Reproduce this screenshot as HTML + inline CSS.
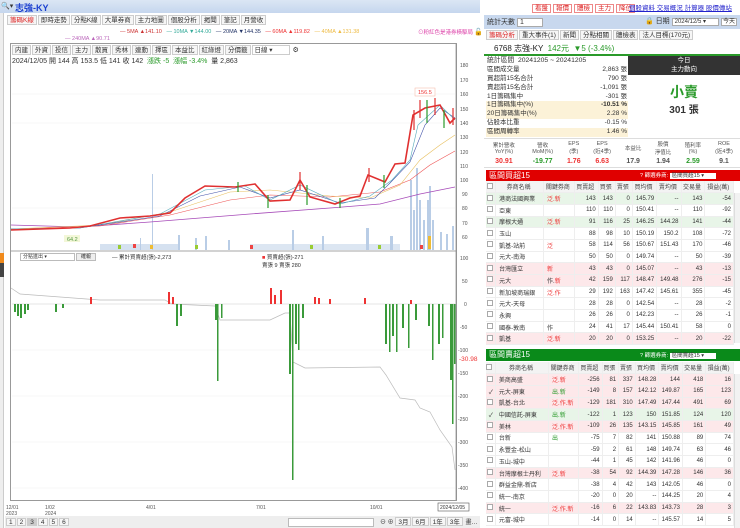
<!DOCTYPE html>
<html><head><meta charset="utf-8"><style>
*{margin:0;padding:0;box-sizing:border-box}
body{width:740px;height:528px;overflow:hidden;background:#fff;font-family:"Liberation Sans","Noto Sans CJK TC",sans-serif;font-size:7px;color:#333;position:relative}
.a{position:absolute;white-space:nowrap}
.tab{display:inline-block;border:1px solid #ccc;background:#f6f6f6;padding:0 2px;height:10px;line-height:9px;font-size:6.5px;margin-right:1px}
table{border-collapse:collapse;width:100%}
.t td{height:11.7px;font-size:6px;border-bottom:1px solid #eee;border-right:1px solid #eee;text-align:right;padding-right:2px}
.t td.l{text-align:left;padding-left:3px}
.t tr.h td{text-align:center;background:#f3f3f3;color:#444}
.pk{background:#fde8ea}.gn{background:#e8f5e8}
.r{color:#e33}.g{color:#2a9a2a}
.cb{display:inline-block;width:6px;height:6px;border:1px solid #aaa;background:#fff}
.st div{height:8.9px;line-height:8.9px;font-size:6.5px;display:flex;justify-content:space-between;padding:0 1px 0 1px}
</style></head><body>
<div class="a" style="left:0;top:0;width:480px;height:13px;background:linear-gradient(#dbe6f4,#c5d6ee)"></div>
<div class="a" style="left:1px;top:2px;font-size:7px">🔍▾</div>
<div class="a" style="left:15px;top:1px;font-size:9px;color:#1a3fd0;font-weight:bold">志強-KY</div>
<div class="a" style="left:480px;top:0;width:260px;height:14px;background:#fff"></div>
<div class="a" style="left:532px;top:2px;font-size:6.5px;color:#d22">
<span style="border:1px solid #e88;padding:0 2px;margin-right:2px">看盤</span><span style="border:1px solid #e88;padding:0 2px;margin-right:2px">報價</span><span style="border:1px solid #e88;padding:0 2px;margin-right:2px">體檢</span><span style="border:1px solid #e88;padding:0 2px;margin-right:2px">主力</span><span style="border:1px solid #e88;padding:0 2px">降位</span></div>
<div class="a" style="left:629px;top:2px;font-size:6.5px;color:#22c;text-decoration:underline">個股資料 交易概況 計算器 股價傳站</div>
<div class="a" style="left:0;top:13px;width:4px;height:515px;background:#eee;border-right:1px solid #ccc"></div>
<div class="a" style="left:0;top:253px;width:4px;height:10px;background:#f08a1c"></div>
<div class="a" style="left:0;top:263px;width:4px;height:14px;background:#444"></div>
<div class="a" style="left:7px;top:15px"><span class="tab" style="color:#d22">籌碼K線</span><span class="tab">即時走勢</span><span class="tab">分點K線</span><span class="tab">大單券商</span><span class="tab">主力地圖</span><span class="tab">個股分析</span><span class="tab">揭聞</span><span class="tab">筆記</span><span class="tab">月營收</span></div>
<div class="a" style="left:120px;top:29px;font-size:5.5px"><span style="color:#c33">— </span><span style="color:#c33">5MA ▲141.10</span> &nbsp;&nbsp;<span style="color:#3a9">— 10MA ▼144.00</span> &nbsp;&nbsp;<span style="color:#236">— 20MA ▼144.35</span> &nbsp;&nbsp;<span style="color:#e33">— 60MA ▲119.82</span> &nbsp;&nbsp;<span style="color:#eb4">— 40MA ▲131.38</span></div>
<div class="a" style="left:65px;top:36px;font-size:5.5px;color:#b6b">— 240MA ▲90.71</div>
<div class="a" style="left:418px;top:28px;font-size:5.5px;color:#d4a">⊙粉紅色是港券橫駆局</div>
<div class="a" style="left:474px;top:28px;font-size:7px">🔓</div>
<div class="a" style="left:10px;top:43px;width:447px;height:458px;border:1px solid #999"></div>
<div class="a" style="left:12px;top:45px"><span class="tab">内建</span><span class="tab">外資</span><span class="tab">投信</span><span class="tab">主力</span><span class="tab">散買</span><span class="tab">秀林</span><span class="tab">連動</span><span class="tab">擇區</span><span class="tab">本益比</span><span class="tab">紅綠燈</span><span class="tab">分價籤</span><span class="tab" style="width:38px;background:#fff">日線 ▾</span> ⚙</div>
<div class="a" style="left:12px;top:56px;font-size:7px">2024/12/05 開 144 高 153.5 低 141 收 142 &nbsp;<span class="g">漲跌 -5 &nbsp;漲幅 -3.4%</span> &nbsp;量 2,863</div>
<svg class="a" style="left:0;top:0" width="480" height="528">
<g font-size="5" fill="#555" font-family="Liberation Sans">
<text x="460" y="67">180</text><text x="460" y="82">170</text><text x="460" y="96">160</text><text x="460" y="111">150</text><text x="460" y="125">140</text><text x="460" y="139">130</text><text x="460" y="154">120</text><text x="460" y="168">110</text><text x="460" y="182">100</text><text x="462" y="196">90</text><text x="462" y="210">80</text><text x="462" y="225">70</text><text x="462" y="239">60</text>
<text x="460" y="260">100</text><text x="462" y="283">50</text><text x="464" y="306">0</text><text x="460" y="329">-50</text><text x="458" y="352">-100</text><text x="458" y="375">-150</text><text x="458" y="398">-200</text><text x="458" y="421">-250</text><text x="458" y="444">-300</text><text x="458" y="467">-350</text><text x="458" y="490">-400</text>
<text x="6" y="509">12/01</text><text x="6" y="515">2023</text><text x="45" y="509">1/02</text><text x="45" y="515">2024</text><text x="146" y="509">4/01</text><text x="256" y="509">7/01</text><text x="370" y="509">10/01</text></g>
<rect x="438" y="503" width="31" height="8" fill="#fff" stroke="#555" stroke-width=".6"/><text x="440" y="509" font-size="5" fill="#333">2024/12/05</text>
<g stroke="#f0f0f0" stroke-width=".6"><line x1="12" y1="94" x2="455" y2="94"/><line x1="12" y1="123" x2="455" y2="123"/><line x1="12" y1="208" x2="455" y2="208"/><line x1="12" y1="350" x2="455" y2="350"/><line x1="12" y1="396" x2="455" y2="396"/><line x1="12" y1="442" x2="455" y2="442"/><line x1="12" y1="488" x2="455" y2="488"/></g>
<line x1="456" y1="44" x2="456" y2="500" stroke="#888" stroke-width=".7"/>
<line x1="11" y1="251" x2="456" y2="251" stroke="#888" stroke-width=".7"/>
<g fill="#b9cde6">
<rect x="152" y="174" width="1" height="76"/><rect x="140" y="238" width="1" height="12"/><rect x="178" y="235" width="2" height="15"/><rect x="195" y="238" width="2" height="12"/><rect x="205" y="236" width="2" height="14"/><rect x="228" y="240" width="2" height="10"/><rect x="292" y="230" width="2" height="20"/><rect x="322" y="236" width="2" height="14"/><rect x="366" y="228" width="3" height="22"/><rect x="390" y="236" width="3" height="14"/><rect x="410" y="180" width="2" height="70"/><rect x="413" y="210" width="2" height="40"/><rect x="416" y="168" width="2" height="82"/><rect x="419" y="200" width="2" height="50"/><rect x="423" y="220" width="2" height="30"/><rect x="427" y="200" width="2" height="50"/><rect x="429" y="186" width="2" height="64"/><rect x="432" y="220" width="2" height="30"/><rect x="440" y="232" width="2" height="18"/><rect x="446" y="234" width="2" height="16"/><rect x="452" y="226" width="2" height="24"/>
<rect x="100" y="244" width="80" height="6" opacity=".6"/><rect x="250" y="244" width="150" height="6" opacity=".5"/></g>
<polyline fill="none" stroke="#a64ab8" stroke-width=".8" points="11,225 80,227 150,222 250,214 330,208 380,204 420,194 455,187"/>
<polyline fill="none" stroke="#ee5555" stroke-width=".6" points="11,229 100,226 170,215 230,200 270,195 330,197 380,192 410,180 430,165 455,151"/>
<polyline fill="none" stroke="#e8c060" stroke-width=".6" points="11,229 100,225 170,212 230,192 270,190 330,196 370,198 400,185 420,160 440,145 455,135"/>
<polyline fill="none" stroke="#4455aa" stroke-width=".6" points="11,229 80,228 160,216 200,196 240,187 270,198 300,190 340,203 375,198 390,183 410,162 425,125 440,108 455,118"/>
<polyline fill="none" stroke="#5ab" stroke-width=".6" points="11,229 80,228 160,214 205,190 245,186 270,200 300,185 340,204 370,196 392,180 410,160 418,125 440,105 455,120"/>
<polyline fill="none" stroke="#e03030" stroke-width="1.6" points="11,230 70,228 90,226 120,218 150,216 170,213 185,198 205,186 235,187 255,184 270,201 290,200 300,180 310,197 335,204 350,198 360,196 368,175 385,182 395,164 405,163 413,115 425,108 440,105 450,123 455,118"/>
<g stroke="#e03030" stroke-width="1.2"><line x1="300" y1="172" x2="300" y2="190"/><line x1="369" y1="168" x2="369" y2="182"/><line x1="414" y1="110" x2="414" y2="130"/><line x1="420" y1="100" x2="420" y2="118"/><line x1="435" y1="98" x2="435" y2="115"/><line x1="453" y1="108" x2="453" y2="125"/></g>
<g stroke="#2a9a2a" stroke-width="1.2"><line x1="268" y1="195" x2="268" y2="208"/><line x1="307" y1="185" x2="307" y2="205"/><line x1="340" y1="198" x2="340" y2="208"/><line x1="384" y1="175" x2="384" y2="188"/><line x1="427" y1="100" x2="427" y2="123"/><line x1="444" y1="110" x2="444" y2="128"/><line x1="238" y1="182" x2="238" y2="192"/></g>
<rect x="415" y="88" width="20" height="8" fill="#fff" stroke="#f5b5a0" stroke-width=".5"/><text x="418" y="94" font-size="5.5" fill="#e33">156.5</text>
<rect x="64" y="235" width="16" height="7" fill="#f3f7d8"/><text x="67" y="241" font-size="5.5" fill="#594">64.2</text>
<g fill="#e44"><rect x="133" y="244" width="3" height="4"/><rect x="250" y="245" width="3" height="4"/><rect x="420" y="245" width="3" height="4"/></g>
<g fill="#9c3"><rect x="118" y="245" width="3" height="4"/><rect x="195" y="245" width="3" height="4"/><rect x="310" y="245" width="3" height="4"/><rect x="378" y="245" width="3" height="4"/></g>
<g fill="#eb3"><rect x="150" y="245" width="3" height="4"/><rect x="428" y="236" width="3" height="13"/></g>
<line x1="12" y1="304" x2="455" y2="304" stroke="#ccc" stroke-width=".6"/>
<polyline fill="none" stroke="#bbb" stroke-width=".7" points="11,288 20,294 60,297 100,300 165,300 172,304 215,306 220,320 270,320 285,313 290,313 293,362 305,368 380,367 386,375 400,398 415,400 420,408 430,412 440,430 452,447 455,470"/>
<g fill="#e33"><rect x="90" y="297" width="2" height="7"/><rect x="168" y="292" width="2" height="12"/><rect x="172" y="297" width="2" height="7"/><rect x="270" y="288" width="2" height="16"/><rect x="274" y="295" width="2" height="9"/><rect x="280" y="290" width="2" height="14"/><rect x="314" y="297" width="2" height="7"/><rect x="318" y="298" width="2" height="6"/><rect x="329" y="299" width="2" height="5"/><rect x="364" y="298" width="2" height="6"/><rect x="410" y="300" width="2" height="4"/></g>
<g fill="#3a9a3a"><rect x="14" y="304" width="2" height="8"/><rect x="17" y="304" width="2" height="12"/><rect x="20" y="304" width="2" height="14"/><rect x="24" y="304" width="2" height="10"/><rect x="27" y="304" width="2" height="6"/><rect x="55" y="304" width="2" height="8"/><rect x="62" y="304" width="2" height="4"/><rect x="176" y="304" width="2" height="22"/><rect x="180" y="304" width="2" height="12"/><rect x="215" y="304" width="2" height="16"/><rect x="217" y="304" width="1.5" height="77"/><rect x="221" y="304" width="1.5" height="14"/><rect x="289" y="304" width="2" height="70"/><rect x="292" y="304" width="1.5" height="176"/><rect x="295" y="304" width="2" height="40"/><rect x="298" y="304" width="1.5" height="46"/><rect x="302" y="304" width="2" height="14"/><rect x="385" y="304" width="2" height="40"/><rect x="389" y="304" width="1.5" height="48"/><rect x="392" y="304" width="2" height="32"/><rect x="396" y="304" width="1.5" height="48"/><rect x="402" y="304" width="2" height="24"/><rect x="408" y="304" width="1.5" height="44"/><rect x="415" y="304" width="2" height="16"/><rect x="428" y="304" width="2" height="22"/><rect x="432" y="304" width="1.5" height="56"/><rect x="438" y="304" width="2" height="40"/><rect x="442" y="304" width="1.5" height="34"/><rect x="450" y="304" width="2" height="76"/><rect x="452" y="304" width="1.5" height="120"/><rect x="454" y="304" width="1.5" height="60"/></g>
<text x="459" y="361" font-size="6.5" fill="#e33">-30.98</text>
</svg>
<div class="a" style="left:20px;top:253px;width:55px;height:8px;border:1px solid #bbb;font-size:5px;line-height:7px;padding-left:2px;background:#fff">分點進出 ▾</div>
<div class="a" style="left:76px;top:253px;width:20px;height:8px;border:1px solid #bbb;background:#eee;font-size:5px;text-align:center;line-height:7px">確報</div>
<div class="a" style="left:112px;top:253px;font-size:5.5px">— 累計買賣超(張)-2,273</div>
<div class="a" style="left:262px;top:253px;font-size:5.5px"><span style="color:#e33">■</span> 買賣超(張)-271<br>賣張 9 賣張 280</div>
<div class="a" style="left:5px;top:516px;width:475px;height:12px;background:#eee"></div>
<div class="a" style="left:6px;top:518px;font-size:5.5px"><span class="tab" style="height:8px;line-height:7px">1</span><span class="tab" style="height:8px;line-height:7px">2</span><span class="tab" style="height:8px;line-height:7px;background:#ccc">3</span><span class="tab" style="height:8px;line-height:7px">4</span><span class="tab" style="height:8px;line-height:7px">5</span><span class="tab" style="height:8px;line-height:7px">6</span></div>
<div class="a" style="left:288px;top:518px;width:86px;height:9px;border:1px solid #bbb;background:#fff"></div>
<div class="a" style="left:380px;top:517px;font-size:6px">⊖ ⊕ <span class="tab" style="height:9px">3月</span><span class="tab" style="height:9px">6月</span><span class="tab" style="height:9px">1年</span><span class="tab" style="height:9px">3年</span> 畫…</div>
<!-- right panel -->
<div class="a" style="left:484px;top:15px;width:256px;height:14px;background:#c8d8ee"></div>
<div class="a" style="left:487px;top:17px;font-size:7px">統計天數 <span style="background:#fff;border:1px solid #aaa;padding:0 18px 0 2px">1</span></div>
<div class="a" style="left:645px;top:16px;font-size:7px">🔒 日期 <span style="background:#fff;border:1px solid #aaa;padding:0 12px 0 2px;font-size:6px">2024/12/5 ▾</span> <span style="background:#fff;border:1px solid #aaa;font-size:6px;padding:0 1px">今天</span></div>
<div class="a" style="left:486px;top:30px"><span class="tab" style="color:#d22">籌碼分析</span><span class="tab">重大事件(1)</span><span class="tab">新聞</span><span class="tab">分點相關</span><span class="tab">體檢表</span><span class="tab">法人目標(170元)</span></div>
<div class="a" style="left:484px;top:42px;width:256px;height:14px;border-bottom:2px solid #2a9a2a"></div>
<div class="a" style="left:494px;top:43px;font-size:8px;color:#222">6768 志強-KY &nbsp;<span class="g">142元 &nbsp;▼5 (-3.4%)</span></div>
<div class="a st" style="left:486px;top:57px;width:142px">
<div><span style="font-size:6.8px">統計區間 &nbsp;20241205 ~ 20241205</span></div>
<div><span>區間成交量</span><span>2,863 張</span></div>
<div><span>買超前15名合計</span><span>790 張</span></div>
<div><span>賣超前15名合計</span><span>-1,091 張</span></div>
<div><span>1日籌碼集中</span><span>-301 張</span></div>
<div style="background:#fcf2d8"><span>1日籌碼集中(%)</span><b>-10.51 %</b></div>
<div style="background:#fcf2d8"><span>20日籌碼集中(%)</span><span>2.28 %</span></div>
<div><span>佔股本比重</span><span>-0.15 %</span></div>
<div style="background:#fcf2d8"><span>區間周轉率</span><span>1.46 %</span></div>
</div>
<div class="a" style="left:628px;top:56px;width:112px;height:19px;background:#333;color:#fff;text-align:center;font-size:6.5px;line-height:9px">今日<br>主力動向</div>
<div class="a" style="left:628px;top:82px;width:112px;text-align:center;font-size:14px;color:#2a9a2a;font-weight:bold">小賣</div>
<div class="a" style="left:628px;top:101px;width:112px;text-align:center;font-size:10px;color:#333;font-weight:bold">301 張</div>
<div class="a" style="left:484px;top:138px;width:256px;height:30px;border-top:1px solid #ddd;border-bottom:1px solid #ddd;background:#fff"></div>
<table class="a" style="left:484px;top:139px;width:256px;text-align:center;font-size:5.5px;color:#555">
<tr style="height:17px"><td>累計營收<br>YoY(%)</td><td>營收<br>MoM(%)</td><td>EPS<br>(季)</td><td>EPS<br>(近4季)</td><td>本益比</td><td>股價<br>淨值比</td><td>殖利率<br>(%)</td><td>ROE<br>(近4季)</td></tr>
<tr style="font-size:7px;font-weight:bold;height:11px"><td class="r">30.91</td><td class="g">-19.77</td><td class="r">1.76</td><td class="r">6.63</td><td>17.9</td><td>1.94</td><td class="g">2.59</td><td>9.1</td></tr></table>
<div class="a" style="left:486px;top:170px;width:254px;height:11px;background:#e00000;color:#fff;font-size:8px;padding-left:3px;line-height:11px">區間買超15</div>
<div class="a" style="left:640px;top:171px;font-size:5.5px;color:#fff">? 篩選券商: <span style="background:#fff;color:#333;padding:0 12px 0 2px">區間買超15 ▾</span></div>
<table class="a t" style="left:486px;top:181px;width:248px">
<tr class="h"><td><span class="cb"></span></td><td>券商名稱</td><td>關鍵券商</td><td>買賣超</td><td>買張</td><td>賣張</td><td>買均價</td><td>賣均價</td><td>交易量</td><td>損益(萬)</td></tr>
<tr class="gn"><td><span class="cb"></span></td><td class="l">港商法國興業</td><td class="l r">泛.新</td><td>143</td><td>143</td><td>0</td><td>145.79</td><td>--</td><td>143</td><td>-54</td></tr>
<tr><td><span class="cb"></span></td><td class="l">亞東</td><td></td><td>110</td><td>110</td><td>0</td><td>150.41</td><td>--</td><td>110</td><td>-92</td></tr>
<tr class="gn"><td><span class="cb"></span></td><td class="l">摩根大通</td><td class="l r">泛.新</td><td>91</td><td>116</td><td>25</td><td>146.25</td><td>144.28</td><td>141</td><td>-44</td></tr>
<tr><td><span class="cb"></span></td><td class="l">玉山</td><td></td><td>88</td><td>98</td><td>10</td><td>150.19</td><td>150.2</td><td>108</td><td>-72</td></tr>
<tr><td><span class="cb"></span></td><td class="l">凱基-站前</td><td class="l r">泛</td><td>58</td><td>114</td><td>56</td><td>150.67</td><td>151.43</td><td>170</td><td>-46</td></tr>
<tr><td><span class="cb"></span></td><td class="l">元大-南海</td><td></td><td>50</td><td>50</td><td>0</td><td>149.74</td><td>--</td><td>50</td><td>-39</td></tr>
<tr class="pk"><td><span class="cb"></span></td><td class="l">台灣匯立</td><td class="l r">新</td><td>43</td><td>43</td><td>0</td><td>145.07</td><td>--</td><td>43</td><td>-13</td></tr>
<tr class="pk"><td><span class="cb"></span></td><td class="l">元大</td><td class="l">作.<span class="r">新</span></td><td>42</td><td>159</td><td>117</td><td>148.47</td><td>149.48</td><td>276</td><td>-15</td></tr>
<tr><td><span class="cb"></span></td><td class="l">新加坡商瑞銀</td><td class="l r">泛.作</td><td>29</td><td>192</td><td>163</td><td>147.42</td><td>145.61</td><td>355</td><td>-45</td></tr>
<tr><td><span class="cb"></span></td><td class="l">元大-天母</td><td></td><td>28</td><td>28</td><td>0</td><td>142.54</td><td>--</td><td>28</td><td>-2</td></tr>
<tr><td><span class="cb"></span></td><td class="l">永興</td><td></td><td>26</td><td>26</td><td>0</td><td>142.23</td><td>--</td><td>26</td><td>-1</td></tr>
<tr><td><span class="cb"></span></td><td class="l">國泰-敦南</td><td class="l">作</td><td>24</td><td>41</td><td>17</td><td>145.44</td><td>150.41</td><td>58</td><td>0</td></tr>
<tr class="pk"><td><span class="cb"></span></td><td class="l">凱基</td><td class="l r">泛.新</td><td>20</td><td>20</td><td>0</td><td>153.25</td><td>--</td><td>20</td><td>-22</td></tr>
</table>
<div class="a" style="left:486px;top:349px;width:254px;height:12px;background:#0a8a1a;color:#fff;font-size:8px;padding-left:3px;line-height:12px">區間賣超15</div>
<div class="a" style="left:640px;top:351px;font-size:5.5px;color:#fff">? 篩選券商: <span style="background:#fff;color:#333;padding:0 12px 0 2px">區間賣超15 ▾</span></div>
<table class="a t" style="left:486px;top:362px;width:248px">
<tr class="h"><td><span class="cb"></span></td><td>券商名稱</td><td>關鍵券商</td><td>買賣超</td><td>買張</td><td>賣張</td><td>買均價</td><td>賣均價</td><td>交易量</td><td>損益(萬)</td></tr>
<tr class="pk"><td><span class="cb"></span></td><td class="l">美商高盛</td><td class="l r">泛.新</td><td>-256</td><td>81</td><td>337</td><td>148.28</td><td>144</td><td>418</td><td>16</td></tr>
<tr class="pk"><td>✓</td><td class="l">元大-屏東</td><td class="l g">出.新</td><td>-149</td><td>8</td><td>157</td><td>142.12</td><td>149.87</td><td>165</td><td>123</td></tr>
<tr class="pk"><td><span class="cb"></span></td><td class="l">凱基-台北</td><td class="l r">泛.作.新</td><td>-129</td><td>181</td><td>310</td><td>147.49</td><td>147.44</td><td>491</td><td>69</td></tr>
<tr class="gn"><td>✓</td><td class="l">中國信託-屏東</td><td class="l g">出.新</td><td>-122</td><td>1</td><td>123</td><td>150</td><td>151.85</td><td>124</td><td>120</td></tr>
<tr class="pk"><td><span class="cb"></span></td><td class="l">美林</td><td class="l r">泛.作.新</td><td>-109</td><td>26</td><td>135</td><td>143.15</td><td>145.85</td><td>161</td><td>49</td></tr>
<tr><td><span class="cb"></span></td><td class="l">台新</td><td class="l g">出</td><td>-75</td><td>7</td><td>82</td><td>141</td><td>150.88</td><td>89</td><td>74</td></tr>
<tr><td><span class="cb"></span></td><td class="l">永豐金-松山</td><td></td><td>-59</td><td>2</td><td>61</td><td>148</td><td>149.74</td><td>63</td><td>46</td></tr>
<tr><td><span class="cb"></span></td><td class="l">玉山-城中</td><td></td><td>-44</td><td>1</td><td>45</td><td>142</td><td>141.96</td><td>46</td><td>0</td></tr>
<tr class="pk"><td><span class="cb"></span></td><td class="l">台灣摩根士丹利</td><td class="l r">泛.新</td><td>-38</td><td>54</td><td>92</td><td>144.39</td><td>147.28</td><td>146</td><td>36</td></tr>
<tr><td><span class="cb"></span></td><td class="l">群益金鼎-新店</td><td></td><td>-38</td><td>4</td><td>42</td><td>143</td><td>142.05</td><td>46</td><td>0</td></tr>
<tr><td><span class="cb"></span></td><td class="l">統一-南京</td><td></td><td>-20</td><td>0</td><td>20</td><td>--</td><td>144.25</td><td>20</td><td>4</td></tr>
<tr class="pk"><td><span class="cb"></span></td><td class="l">統一</td><td class="l r">泛.作.新</td><td>-16</td><td>6</td><td>22</td><td>143.83</td><td>143.73</td><td>28</td><td>3</td></tr>
<tr><td><span class="cb"></span></td><td class="l">元富-城中</td><td></td><td>-14</td><td>0</td><td>14</td><td>--</td><td>145.57</td><td>14</td><td>5</td></tr>
</table>
<div class="a" style="left:734px;top:193px;width:6px;height:150px;background:#f2f2f2;border-left:1px solid #ddd"></div>
<div class="a" style="left:734px;top:374px;width:6px;height:154px;background:#f2f2f2;border-left:1px solid #ddd"></div>
</body></html>
